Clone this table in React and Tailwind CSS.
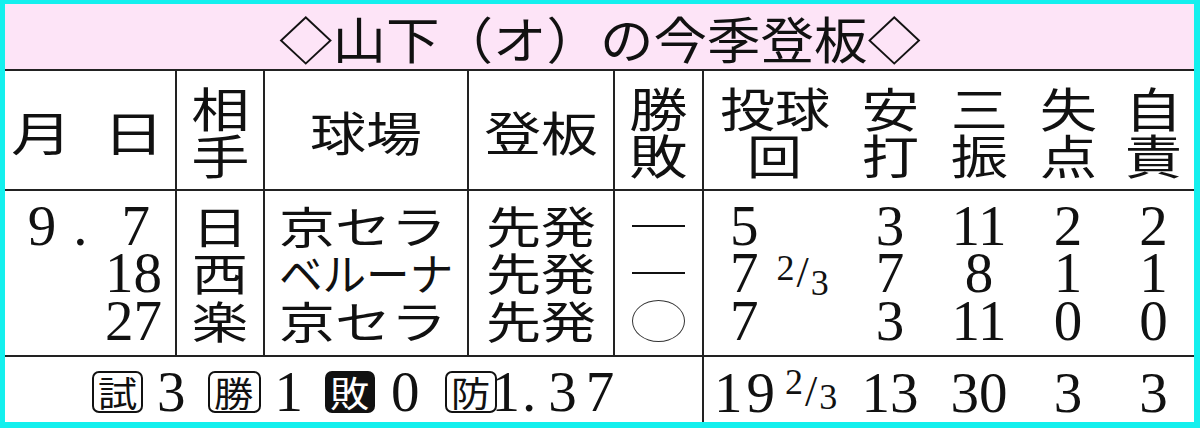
// 山下（オ）の今季登板 — newspaper-style pitching log table

const CJK = "font-['Noto_Sans_CJK_JP',sans-serif]";
const NUM = "font-['Liberation_Serif','Noto_Sans_CJK_JP',serif]";
const LINE = "border-[#222]";

// Newspaper type is set wide (平体); stretch glyphs horizontally without touching layout.
const Wide = ({ children, s = "scale-x-[1.2]", o = "origin-center", className = "" }) => (
  <span className={`inline-block ${s} ${o} ${className}`}>{children}</span>
);

const Frac = ({ className = "", up = "-translate-y-[5px]", down = "translate-y-[10px]" }) => (
  <span className={`inline-flex items-center h-[47px] text-[36px] leading-none ${className}`}>
    <span className={up}>2</span>
    <span className="text-[44px] mx-[2px]">/</span>
    <span className={down}>3</span>
  </span>
);

const Box = ({ children, dark = false, className = "w-[51px]" }) => (
  <span
    className={`inline-flex h-[42px] items-center justify-center rounded-[7px] border-2 border-[#111] ${CJK} text-[35px] leading-none ${
      dark ? "bg-[#111] text-white" : "bg-white text-[#111]"
    } ${className}`}
  >
    <Wide s="scale-x-[1.12]">{children}</Wide>
  </span>
);

const Stack = ({ top, bottom, s = "scale-x-[1.2]" }) => (
  <div className="flex flex-col items-center justify-center leading-[47.5px]">
    <Wide s={s}>{top}</Wide>
    <Wide s={s}>{bottom}</Wide>
  </div>
);

const StatCol = ({ vals }) => (
  <div className="flex flex-col items-center justify-center">
    {vals.map((v, i) => (
      <div key={i}>{v}</div>
    ))}
  </div>
);

export default function App() {
  return (
    <div className="w-[1200px] h-[428px] bg-[#14f0ee] pt-[4px] pl-[5px] pr-[6px] pb-[6px]">
      <div className="bg-white h-full flex flex-col text-[#111]">
        {/* title */}
        <div
          className={`h-[67px] shrink-0 border-b-2 ${LINE} bg-[#fde4f7] flex items-center justify-center ${CJK} text-[50px] leading-none`}
        >
          <Wide s="scale-x-[1.07]">◇山下（オ）の今季登板◇</Wide>
        </div>

        {/* header */}
        <div
          className={`grid grid-cols-[172px_88px_204px_146px_89px_490px] h-[120px] shrink-0 border-b-2 ${LINE} ${CJK} text-[47px] leading-none`}
        >
          <div className={`border-r-2 ${LINE} flex items-center justify-between pl-[13px] pr-[18px]`}>
            <Wide s="scale-x-[1.3]">月</Wide>
            <Wide s="scale-x-[1.3]">日</Wide>
          </div>
          <div className={`border-r-2 ${LINE} flex items-center justify-center`}>
            <Stack top="相" bottom="手" s="scale-x-[1.24]" />
          </div>
          <div className={`border-r-2 ${LINE} flex items-center justify-center`}>
            <Wide s="scale-x-[1.19]">球場</Wide>
          </div>
          <div className={`border-r-2 ${LINE} flex items-center justify-center`}>
            <Wide s="scale-x-[1.21]">登板</Wide>
          </div>
          <div className={`border-r-2 ${LINE} flex items-center justify-center`}>
            <Stack top="勝" bottom="敗" s="scale-x-[1.24]" />
          </div>
          <div className="grid grid-cols-[141px_90px_88px_90px_81px]">
            <Stack top="投球" bottom="回" s="scale-x-[1.17]" />
            <Stack top="安" bottom="打" s="scale-x-[1.22]" />
            <Stack top="三" bottom="振" s="scale-x-[1.22]" />
            <Stack top="失" bottom="点" s="scale-x-[1.22]" />
            <Stack top="自" bottom="責" s="scale-x-[1.22]" />
          </div>
        </div>

        {/* games */}
        <div
          className={`grid grid-cols-[172px_88px_204px_146px_89px_490px] h-[166px] shrink-0 border-b-2 ${LINE} leading-[47.5px]`}
        >
          <div className={`border-r-2 ${LINE} flex flex-col items-end justify-center pr-[13px] ${NUM} text-[57px]`}>
            <div className="flex mr-[12px]">
              <span>9</span>
              <span className="ml-[17px]">.</span>
              <span className="ml-[34px]">7</span>
            </div>
            <div>18</div>
            <div>27</div>
          </div>
          <div className={`border-r-2 ${LINE} flex flex-col items-center justify-center ${CJK} text-[44px]`}>
            <Wide s="scale-x-[1.28]">日</Wide>
            <Wide s="scale-x-[1.28]">西</Wide>
            <Wide s="scale-x-[1.28]">楽</Wide>
          </div>
          <div className={`border-r-2 ${LINE} flex flex-col items-start justify-center pl-[14px] ${CJK} text-[44px]`}>
            <Wide s="scale-x-[1.27]" o="origin-left">京セラ</Wide>
            <Wide s="scale-x-[0.99]" o="origin-left">ベルーナ</Wide>
            <Wide s="scale-x-[1.27]" o="origin-left">京セラ</Wide>
          </div>
          <div className={`border-r-2 ${LINE} flex flex-col items-center justify-center ${CJK} text-[44px]`}>
            <Wide s="scale-x-[1.25]">先発</Wide>
            <Wide s="scale-x-[1.25]">先発</Wide>
            <Wide s="scale-x-[1.25]">先発</Wide>
          </div>
          <div className={`border-r-2 ${LINE} flex flex-col items-center justify-center`}>
            <div className="h-[47.5px] flex items-center">
              <div className="w-[53px] h-[2px] bg-[#111]" />
            </div>
            <div className="h-[47.5px] flex items-center">
              <div className="w-[53px] h-[2px] bg-[#111]" />
            </div>
            <div className="h-[47.5px] flex items-center">
              <div className="w-[53px] h-[42px] rounded-[50%] border-[1.5px] border-[#333]" />
            </div>
          </div>
          <div className={`grid grid-cols-[141px_90px_88px_90px_81px] ${NUM} text-[57px]`}>
            <div className="flex flex-col justify-center pl-[26px]">
              <div>5</div>
              <div className="flex items-center">
                <span>7</span>
                <Frac className="ml-[18px]" />
              </div>
              <div>7</div>
            </div>
            <StatCol vals={["3", "7", "3"]} />
            <StatCol vals={["11", "8", "11"]} />
            <StatCol vals={["2", "1", "0"]} />
            <StatCol vals={["2", "1", "0"]} />
          </div>
        </div>

        {/* season totals */}
        <div className="grid grid-cols-[699px_490px] flex-1">
          <div className={`border-r-2 ${LINE} flex items-center pl-[87px] pt-[4px] ${NUM} text-[57px] leading-none`}>
            <Box>試</Box>
            <span className="ml-[14px]">3</span>
            <Box className="ml-[22px] w-[53px]">勝</Box>
            <span className="ml-[14px]">1</span>
            <Box dark className="ml-[22px] w-[50px]">敗</Box>
            <span className="ml-[16px]">0</span>
            <Box className="ml-[25px] w-[52px]">防</Box>
            <span className="-ml-[5px]">1</span>
            <span className="ml-[2px]">.</span>
            <span className="ml-[12px]">3</span>
            <span className="ml-[9px]">7</span>
          </div>
          <div className={`grid grid-cols-[141px_90px_88px_90px_81px] items-center pt-[5px] ${NUM} text-[57px] leading-none`}>
            <div className="flex items-center pl-[10px]">
              <span>1</span>
              <span className="ml-[4px]">9</span>
              <Frac className="ml-[10px]" up="-translate-y-[10px]" down="translate-y-[5px]" />
            </div>
            <div className="text-center">13</div>
            <div className="text-center">30</div>
            <div className="text-center">3</div>
            <div className="text-center">3</div>
          </div>
        </div>
      </div>
    </div>
  );
}
